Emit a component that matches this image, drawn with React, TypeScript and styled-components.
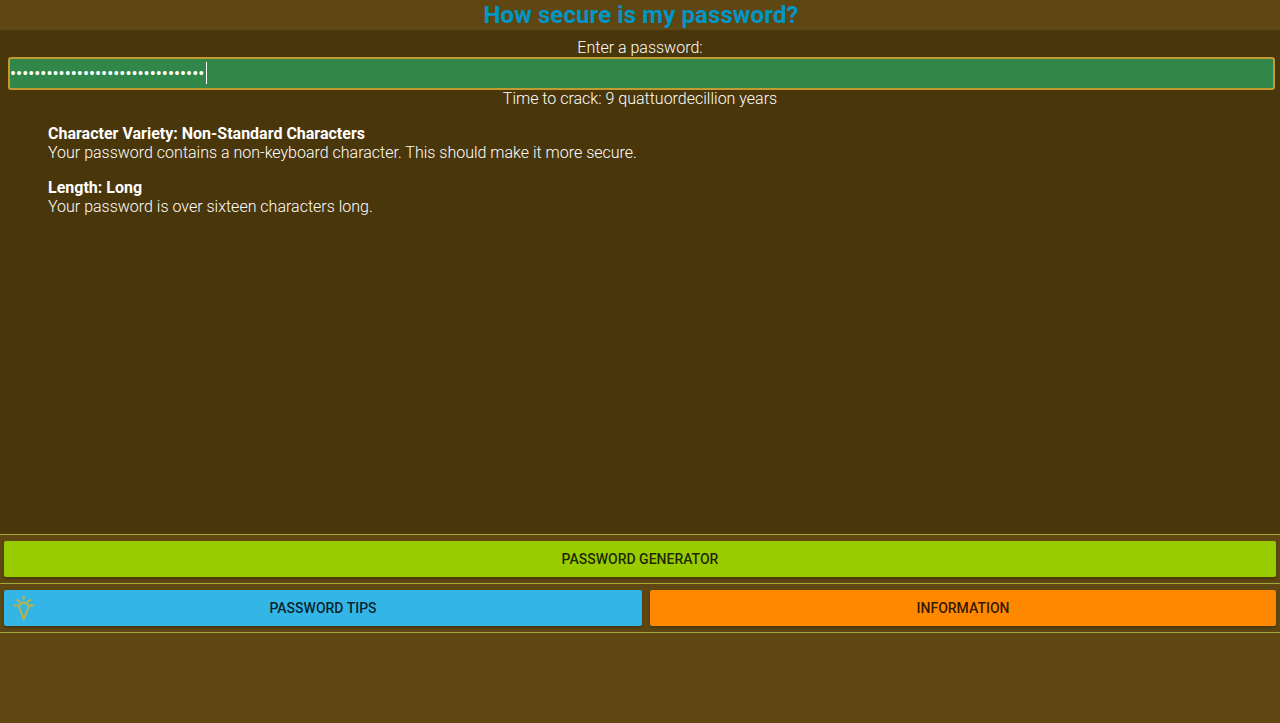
import React from "react";
import styled, { createGlobalStyle } from "styled-components";

const Global = createGlobalStyle`
  html, body { margin: 0; padding: 0; height: 100%; }
  body { font-family: Roboto, "Liberation Sans", sans-serif; background: #5e4712; }
  #root { height: 100%; }
`;

const Page = styled.div`
  display: flex;
  flex-direction: column;
  height: 723px;
  overflow: hidden;
  background: #5e4712;
  color: #fff;
  font-size: 16px;
  font-weight: 300;
  line-height: 19px;
`;

const Header = styled.h1`
  margin: 0;
  height: 30px;
  flex: none;
  padding-left: 2px;
  background: #5e4712;
  color: #0096c8;
  font-size: 24px;
  line-height: 30px;
  font-weight: 700;
  letter-spacing: 0.1px;
  text-align: center;
`;

const Main = styled.main`
  flex: none;
  height: 504px;
  box-sizing: border-box;
  background: #4a360b;
  padding: 8px 5px 0 8px;
`;

const Centered = styled.div`
  text-align: center;
  height: 19px;
  margin-right: 3px;
`;

const InputWrap = styled.div`
  position: relative;
  height: 32px;
`;

const PasswordInput = styled.input`
  display: block;
  box-sizing: border-box;
  width: 100%;
  height: 33px;
  margin: 0;
  padding: 0;
  border: 2px solid #c39a32;
  border-radius: 3px;
  outline: none;
  background: #318649;
  color: #fff;
  caret-color: transparent;
  font-family: Roboto, sans-serif;
  font-size: 18px;
  font-weight: 400;
`;

const Caret = styled.span`
  position: absolute;
  left: 198px;
  top: 5px;
  width: 1px;
  height: 22px;
  background: #fff;
`;

const Feedback = styled.section`
  padding-left: 40px;
  margin-top: 16px;
`;

const Item = styled.p`
  margin: 0 0 16px;
  strong { font-weight: 700; }
`;

const Row = styled.div`
  flex: none;
  display: flex;
  gap: 8px;
  height: 49px;
  box-sizing: border-box;
  padding: 6px 4px;
  border-top: 1px solid #a3a73c;
`;

const Button = styled.button<{ $bg: string; $fixed?: boolean }>`
  position: relative;
  flex: ${(p) => (p.$fixed ? "0 0 638px" : "1")};
  min-width: 0;
  height: 36px;
  border: 0;
  border-radius: 2px;
  background: ${(p) => p.$bg};
  color: rgba(0, 0, 0, 0.82);
  font-family: Roboto, sans-serif;
  font-size: 14px;
  font-weight: 500;
  text-transform: uppercase;
  box-shadow: 0 2px 3px rgba(0, 0, 0, 0.25);
`;

const TipIcon = styled.svg`
  position: absolute;
  left: 9px;
  top: 6px;
  width: 22px;
  height: 24px;
`;

const Footer = styled.div`
  flex: 1;
  border-top: 1px solid #a3a73c;
`;

export default function App() {
  return (
    <Page>
      <Global />
      <Header>How secure is my password?</Header>
      <Main>
        <Centered>Enter a password:</Centered>
        <InputWrap>
          <PasswordInput type="password" defaultValue={"x".repeat(32)} autoFocus aria-label="Enter a password" />
          <Caret />
        </InputWrap>
        <Centered>Time to crack: 9 quattuordecillion years</Centered>
        <Feedback>
          <Item>
            <strong>Character Variety: Non-Standard Characters</strong>
            <br />
            Your password contains a non-keyboard character. This should make it more secure.
          </Item>
          <Item>
            <strong>Length: Long</strong>
            <br />
            Your password is over sixteen characters long.
          </Item>
        </Feedback>
      </Main>
      <Row>
        <Button $bg="#99cc00">Password Generator</Button>
      </Row>
      <Row>
        <Button $bg="#33b5e5" $fixed>
          <TipIcon viewBox="0 0 22 24" fill="none" stroke="#c4b13c" strokeWidth="2" strokeLinecap="round" strokeLinejoin="round">
            <path d="M8.5 17.5 L6.6 12.5 A4.5 4.5 0 1 1 15 12.5 L12.6 19 L10.7 23 Z" />
            <path d="M10.7 0.5v2.5M4.5 4l2 1.6M17 4l-2 1.6M1.5 9.5h3M17 9.5h3.2" />
          </TipIcon>
          Password Tips
        </Button>
        <Button $bg="#ff8800">Information</Button>
      </Row>
      <Footer />
    </Page>
  );
}
